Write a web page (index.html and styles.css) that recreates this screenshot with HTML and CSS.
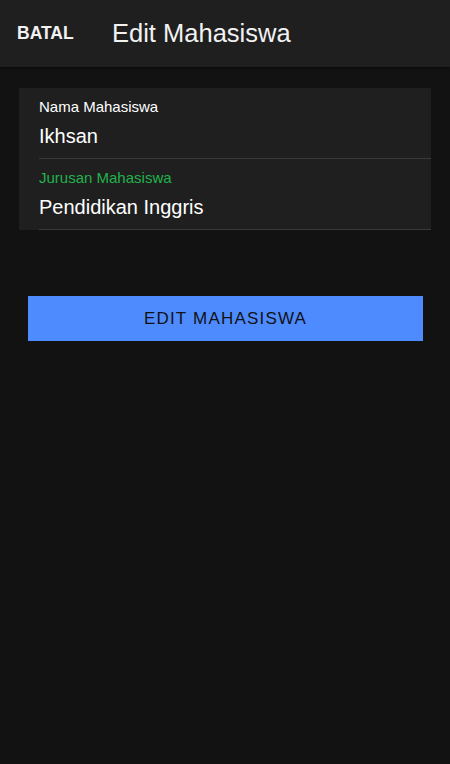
FILE: index.html
```html
<!DOCTYPE html>
<html lang="id">
<head>
<meta charset="utf-8">
<link rel="stylesheet" href="styles.css">
</head>
<body>
<header class="appbar">
  <span class="cancel">BATAL</span>
  <h1 class="title">Edit Mahasiswa</h1>
</header>
<main class="content">
  <section class="card">
    <div class="field">
      <div class="label">Nama Mahasiswa</div>
      <div class="value">Ikhsan</div>
    </div>
    <div class="field">
      <div class="label active">Jurusan Mahasiswa</div>
      <div class="value">Pendidikan Inggris</div>
    </div>
  </section>
  <button class="submit">EDIT MAHASISWA</button>
</main>
</body>
</html>
```
FILE: styles.css
```css
html, body {
  margin: 0;
  padding: 0;
  background: #121212;
  font-family: "Liberation Sans", Arial, sans-serif;
  color: #ffffff;
}
.appbar {
  height: 67px;
  background: #1f1f1f;
  display: flex;
  align-items: center;
  padding-left: 17px;
  box-shadow: 0 1px 3px rgba(0,0,0,0.5);
}
.cancel {
  font-size: 17.5px;
  font-weight: 700;
  color: #f2f2f2;
  width: 95px;
}
.title {
  margin: 0;
  font-size: 25.5px;
  font-weight: 400;
  color: #f2f2f2;
}
.content {
  padding: 21px 19px 0 19px;
}
.card {
  background: #1f1f1f;
  padding-left: 20px;
}
.field {
  border-bottom: 1px solid #3a3a3a;
  padding-top: 10px;
  height: 60px;
}
.label {
  font-size: 15px;
  color: #ffffff;
  line-height: 18px;
}
.label.active {
  color: #22b24c;
}
.value {
  font-size: 20px;
  line-height: 24px;
  margin-top: 8px;
  color: #ffffff;
}
.submit {
  display: block;
  margin: 66px 8px 0 9px;
  width: calc(100% - 17px);
  height: 45px;
  border: none;
  background: #4d8bff;
  color: #121212;
  font-family: "Liberation Sans", Arial, sans-serif;
  font-size: 17px;
  letter-spacing: 1.2px;
}
```
